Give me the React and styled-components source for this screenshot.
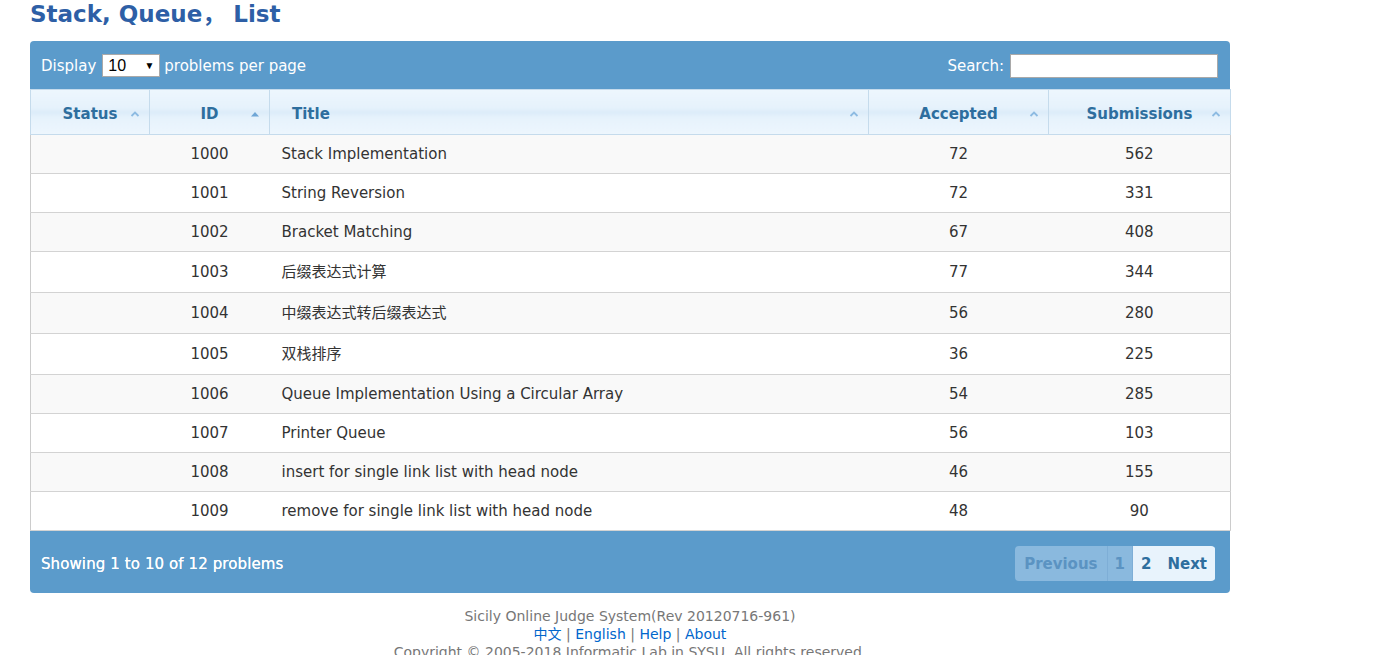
import React from 'react';
import styled, { createGlobalStyle } from 'styled-components';

const GlobalStyle = createGlobalStyle`
    body {
        margin: 0;
        background: #ffffff;
        font-family: "DejaVu Sans", Verdana, "Noto Sans CJK SC", sans-serif;
    }
`

const Page = styled.div`
    padding: 0 0 0 30px;
    width: 1200px;
`
const Heading = styled.h1`
    margin: 0;
    height: 41px;
    line-height: 29px;
    font-size: 23px;
    font-weight: bold;
    color: #2e5fa6;
`
const Panel = styled.div`
    width: 1200px;
`
const TopBar = styled.div`
    height: 48px;
    background: #5b9bcb;
    border-radius: 4px 4px 0 0;
    display: flex;
    align-items: center;
    justify-content: space-between;
    padding: 1px 12px 0 11px;
    box-sizing: border-box;
    color: #ffffff;
    font-size: 15px;
`
const Group = styled.div`
    display: flex;
    align-items: center;
    gap: ${p => p.$gap}px;
`
const FakeSelect = styled.div`
    background: #ffffff;
    border: 1px solid #a9a9a9;
    color: #000;
    display: flex;
    align-items: center;
    justify-content: space-between;
    padding: 0 5px 0 5px;
    box-sizing: border-box;
    width: 58px;
    height: 23px;
    margin-right: -2px;
    font-family: "Liberation Sans", Arial, sans-serif;
    font-size: 16px;
    span.arrow {
        font-size: 10px;
    }
`
const SearchBox = styled.input`
    width: 208px;
    height: 24px;
    box-sizing: border-box;
    border: 1px solid #a9a9a9;
    padding: 0;
`
const Table = styled.table`
    width: 1200px;
    border-collapse: collapse;
    table-layout: fixed;
    font-size: 15px;
    color: #333333;
`
const HeadCell = styled.th`
    position: relative;
    height: 41px;
    padding: ${p => p.$left ? '3px 0 0 22px' : '3px 0 0 0'};
    text-align: ${p => p.$left ? 'left' : 'center'};
    color: #2e6e9e;
    font-weight: bold;
    font-size: 15px;
    background: linear-gradient(#edf6fd 0%, #e6f2fc 38%, #dcecf9 50%, #e6f2fc 62%, #edf6fd 100%);
    border: 1px solid #c5dbec;
`
const SortIcon = styled.span`
    position: absolute;
    right: 9px;
    top: 50%;
    margin-top: -2px;
    width: 10px;
    height: 8px;
    display: flex;
    align-items: center;
    justify-content: center;
`
const Row = styled.tr`
    background: ${p => p.$odd ? '#f9f9f9' : '#ffffff'};
`
const Cell = styled.td`
    padding: 10px ${p => p.$left ? '12px' : '0'};
    line-height: ${p => p.$cjk ? '20px' : '18px'};
    text-align: ${p => p.$left ? 'left' : 'center'};
    border-bottom: 1px solid #d3d3d3;
    border-left: ${p => p.$first ? '1px solid #cccccc' : 'none'};
    border-right: ${p => p.$last ? '1px solid #cccccc' : 'none'};
    white-space: nowrap;
`
const BottomBar = styled.div`
    height: 62px;
    background: #5b9bcb;
    border-radius: 0 0 4px 4px;
    display: flex;
    align-items: center;
    justify-content: space-between;
    padding: 3px 15px 0 11px;
    box-sizing: border-box;
    color: #ffffff;
    font-size: 15px;
    letter-spacing: 0.1px;
    text-shadow: 0 0 0.4px #ffffff;
`
const Pager = styled.div`
    display: flex;
    height: 35px;
    border-radius: 4px;
    overflow: hidden;
    text-shadow: none;
    letter-spacing: 0;
`
const PageButton = styled.div`
    display: flex;
    align-items: center;
    justify-content: center;
    padding: 0 ${p => p.$pad}px;
    font-size: 15px;
    font-weight: bold;
    background: ${p => p.$off ? '#8ab9de' : '#e8f3fc'};
    color: ${p => p.$off ? '#5b93c2' : '#2e6e9e'};
    border-right: 1px solid ${p => p.$off ? '#7eaed6' : '#e8f3fc'};
`
const Footer = styled.div`
    width: 1200px;
    text-align: center;
    color: #777777;
    font-size: 14px;
    line-height: 18px;
    padding-top: 14px;
`
const Link = styled.a`
    color: #0066cc;
    text-decoration: none;
`

const Caret = ({ active }) => (
    active ?
        <svg width="10" height="6" viewBox="0 0 10 6"><path d="M1 5.5 L5 1 L9 5.5 Z" fill="#6fa6d6" /></svg>
        :
        <svg width="10" height="6" viewBox="0 0 10 6"><path d="M1.5 5 L5 1.5 L8.5 5" fill="none" stroke="#8dbbe2" strokeWidth="1.8" /></svg>
)

const problems = [
    [1000, 'Stack Implementation', 72, 562],
    [1001, 'String Reversion', 72, 331],
    [1002, 'Bracket Matching', 67, 408],
    [1003, '后缀表达式计算', 77, 344, true],
    [1004, '中缀表达式转后缀表达式', 56, 280, true],
    [1005, '双栈排序', 36, 225, true],
    [1006, 'Queue Implementation Using a Circular Array', 54, 285],
    [1007, 'Printer Queue', 56, 103],
    [1008, 'insert for single link list with head node', 46, 155],
    [1009, 'remove for single link list with head node', 48, 90],
]

const columns = [
    { name: 'Status', width: 119 },
    { name: 'ID', width: 120, active: true },
    { name: 'Title', width: 599, left: true },
    { name: 'Accepted', width: 180 },
    { name: 'Submissions', width: 182 },
]

const App = () => {
    return (
        <Page>
            <GlobalStyle />
            <Heading>Stack, Queue，&nbsp;List</Heading>
            <Panel>
                <TopBar>
                    <Group $gap={6}>
                        Display
                        <FakeSelect>10<span className="arrow">▼</span></FakeSelect>
                        problems per page
                    </Group>
                    <Group $gap={6}>
                        Search:
                        <SearchBox type="text" />
                    </Group>
                </TopBar>
                <Table>
                    <colgroup>
                        {columns.map(c => <col key={c.name} style={{ width: c.width }} />)}
                    </colgroup>
                    <thead>
                        <tr>
                            {columns.map(c => (
                                <HeadCell key={c.name} $left={c.left}>
                                    {c.name}
                                    <SortIcon><Caret active={c.active} /></SortIcon>
                                </HeadCell>
                            ))}
                        </tr>
                    </thead>
                    <tbody>
                        {problems.map((p, index) => (
                            <Row key={p[0]} $odd={index % 2 === 0}>
                                <Cell $first $cjk={p[4]}></Cell>
                                <Cell $cjk={p[4]}>{p[0]}</Cell>
                                <Cell $left $cjk={p[4]}>{p[1]}</Cell>
                                <Cell $cjk={p[4]}>{p[2]}</Cell>
                                <Cell $last $cjk={p[4]}>{p[3]}</Cell>
                            </Row>
                        ))}
                    </tbody>
                </Table>
                <BottomBar>
                    <span>Showing 1 to 10 of 12 problems</span>
                    <Pager>
                        <PageButton $off $pad={9}>Previous</PageButton>
                        <PageButton $off $pad={7}>1</PageButton>
                        <PageButton $pad={8}>2</PageButton>
                        <PageButton $pad={7}>Next</PageButton>
                    </Pager>
                </BottomBar>
            </Panel>
            <Footer>
                <div>Sicily Online Judge System(Rev 20120716-961)</div>
                <div>
                    <Link href="#">中文</Link> | <Link href="#">English</Link> | <Link href="#">Help</Link> | <Link href="#">About</Link>
                </div>
                <div>Copyright © 2005-2018 Informatic Lab in SYSU. All rights reserved.</div>
            </Footer>
        </Page>
    )
}

export default App;
